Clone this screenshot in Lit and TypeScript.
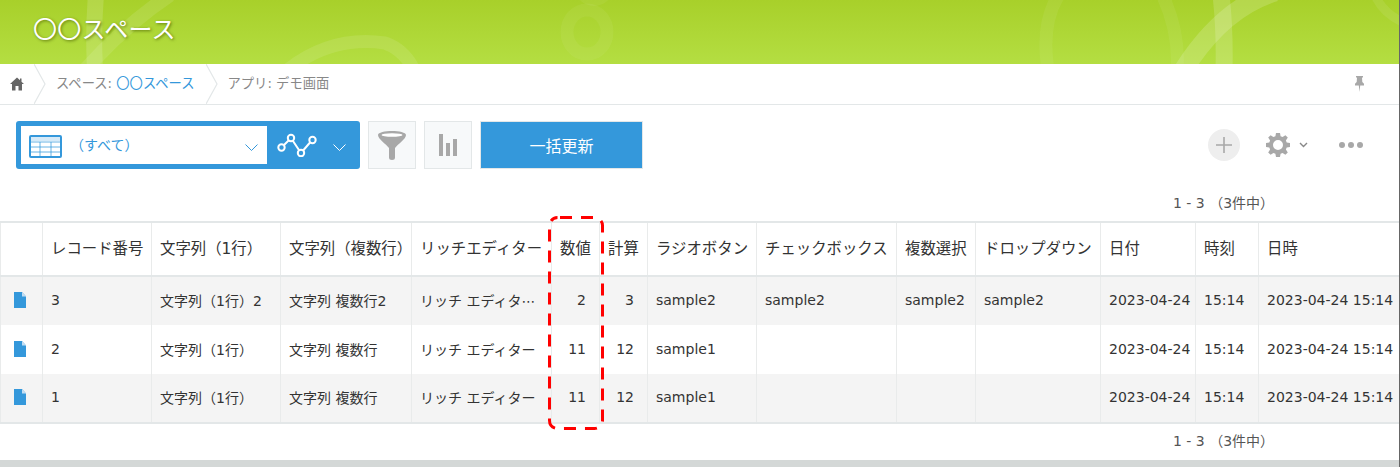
import { LitElement, html, css, unsafeCSS } from "lit";
import { customElement } from "lit/decorators.js";

const FONT = `"DejaVu Sans", "Noto Sans CJK JP", sans-serif`;
const cols = [42, 109, 129, 131, 140, 48, 48, 109, 140, 79, 125, 95, 63, 142];
const headers = ["", "レコード番号", "文字列（1行）", "文字列（複数行）", "リッチエディター", "数値", "計算", "ラジオボタン", "チェックボックス", "複数選択", "ドロップダウン", "日付", "時刻", "日時"];
const rows = [
  ["3", "文字列（1行）2", "文字列 複数行2", "リッチ エディタ⋯", "2", "3", "sample2", "sample2", "sample2", "sample2", "2023-04-24", "15:14", "2023-04-24 15:14"],
  ["2", "文字列（1行）", "文字列 複数行", "リッチ エディター", "11", "12", "sample1", "", "", "", "2023-04-24", "15:14", "2023-04-24 15:14"],
  ["1", "文字列（1行）", "文字列 複数行", "リッチ エディター", "11", "12", "sample1", "", "", "", "2023-04-24", "15:14", "2023-04-24 15:14"],
];

@customElement("app-root")
export class AppRoot extends LitElement {
  static styles = css`
    :host { display: block; position: relative; width: 1400px; height: 467px; overflow: hidden; background: #fff; font-family: ${unsafeCSS(FONT)}; color: #333; font-size: 14px; }
    :host::after { content: ""; position: absolute; right: 0; top: 0; bottom: 0; width: 1px; background: #666; }
    .banner { height: 64px; position: relative; overflow: hidden; background: linear-gradient(#a8d02a, #b4de42); display: flex; align-items: center; padding-left: 33px; padding-bottom: 4px; box-sizing: border-box; }
    .banner svg { position: absolute; left: 0; top: 0; }
    .banner h1 { position: relative; margin: 0; font-size: 24px; letter-spacing: .3px; font-weight: 400; line-height: 1; color: #fff; text-shadow: 1px 1px 3px rgba(70,90,0,.75); }
    .crumbs { height: 40px; box-sizing: content-box; border-bottom: 1px solid #e3e7e8; display: flex; align-items: center; color: #888; position: relative; font-size: 13.3px; }
    .home { width: 34px; display: flex; justify-content: center; }
    .sep { width: 12px; height: 40px; margin: 0 10px 0 0; flex: none; }
    .crumb { margin-right: 11px; line-height: 40px; white-space: nowrap; }
    .crumb a { color: #3498db; }
    .pin { margin-left: auto; margin-right: 36px; display: flex; }
    .toolbar { height: 63px; padding: 16px 16px 0; display: flex; align-items: flex-start; }
    .viewsel { width: 344px; height: 48px; background: #3498db; border-radius: 3px; display: flex; padding: 5px; box-sizing: border-box; flex: none; }
    .viewbox { width: 246px; height: 38px; background: #fff; display: flex; align-items: center; padding-left: 8px; box-sizing: border-box; color: #3498db; font-size: 14px; }
    .tableicon { margin-top: 2px; }
    .viewbox .label { margin-left: 8px; flex: 1; padding-bottom: 2px; }
    .chev { margin-top: 4px; }
    .viewbox .chev { margin-right: 9px; }
    .graph { flex: 1; display: flex; align-items: center; padding-left: 10px; }
    .graph .chev { margin-left: 16px; }
    .iconbtn { width: 48px; height: 48px; background: #f7f9fa; border: 1px solid #e3e7e8; box-sizing: border-box; margin-left: 8px; display: flex; align-items: center; justify-content: center; flex: none; }
    .bulk { width: 163px; height: 48px; margin-left: 8px; background: #3498db; border: 1px solid #e3e7e8; box-sizing: border-box; color: #fff; font-size: 16px; display: flex; align-items: center; justify-content: center; flex: none; }
    .right { margin-left: auto; display: flex; align-items: center; height: 48px; padding-right: 21px; }
    .plus { width: 32px; height: 32px; border-radius: 50%; background: #eee; display: flex; align-items: center; justify-content: center; }
    .gear { margin-left: 26px; display: flex; }
    .gearchev { margin-left: 9px; margin-right: 31px; display: flex; }
    .pager { height: 37px; padding-right: 132px; text-align: right; line-height: 20px; color: #555; padding-top: 9px; box-sizing: border-box; }
    .pager.bottom { height: 36px; padding-top: 7px; }
    .pager span { display: inline-block; width: 95px; text-align: left; white-space: nowrap; }
    table { border-collapse: collapse; table-layout: fixed; width: 1400px; }
    th, td { border: 2px solid #e9ebeb; border-width: 0 0 0 1px; padding: 0 0 2px 8px; font-weight: 400; text-align: left; white-space: nowrap; overflow: hidden; box-sizing: border-box; }
    thead tr { height: 54px; }
    th { border-top: 2px solid #e3e7e8; border-bottom: 2px solid #e3e7e8; font-size: 15.4px; padding-bottom: 5px; }
    tbody tr { height: 49px; }
    tbody tr:last-child { border-bottom: 2px solid #e3e7e8; }
    tbody tr.odd { background: #f4f4f4; }
    td.num { text-align: right; padding: 0 13px 2px 0; }
    td.doc { padding: 0 0 2px 13px; }
    td.doc svg { display: block; }
    .footer { height: 7px; background: #d4d8d7; }
    .dash { position: absolute; left: 546px; top: 214px; }
  `;

  chev(color: string) {
    return html`<svg class="chev" width="13" height="7" viewBox="0 0 13 7"><path d="M.5.5l6 6 6-6" fill="none" stroke=${color} stroke-width="1"/></svg>`;
  }
  sepIcon() {
    return html`<svg class="sep" viewBox="0 0 12 40"><path d="M0 0l11 20L0 40" fill="none" stroke="#e3e7e8" stroke-width="1.2"/></svg>`;
  }

  render() {
    return html`
      <div class="banner">
        <svg width="1400" height="64" fill="none">
          <g stroke="#fff">
            <path d="M96 -5 Q93 30 95 70" stroke-width="16" stroke-opacity=".14"/>
            <path d="M170 -5 Q125 25 85 70" stroke-width="14" stroke-opacity=".1"/>
            <path d="M285 72 Q330 35 385 43 Q405 50 415 72" stroke-width="13" stroke-opacity=".1"/>
            <ellipse cx="587" cy="32" rx="20" ry="22" stroke-opacity=".05" stroke-width="13"/>
            <ellipse cx="594" cy="-10" rx="14" ry="12" stroke-opacity=".05" stroke-width="8"/>
            <path d="M1048 70 Q1040 20 1062 -10" stroke-opacity=".06" stroke-width="13"/>
            <path d="M1177 70 Q1180 30 1160 -10" stroke-opacity=".06" stroke-width="13"/>
            <path d="M1182 72 Q1222 8 1275 -8" stroke-opacity=".16" stroke-width="19"/>
            <path d="M1221 -5 Q1225 30 1224 70" stroke-opacity=".16" stroke-width="17"/>
            <path d="M1375 -5 Q1382 12 1402 22" stroke-opacity=".08" stroke-width="9"/>
          </g>
        </svg>
        <h1>〇〇スペース</h1>
      </div>
      <div class="crumbs">
        <div class="home">
          <svg width="14" height="14" viewBox="0 0 14 14"><path d="M7 .5L0 7h2v6.500h3.500V9h3v4.500H12V7h2l-2.500-2.300V1.500H10v1.800z" fill="#666"/></svg>
        </div>
        ${this.sepIcon()}
        <div class="crumb">スペース: <a>〇〇スペース</a></div>
        ${this.sepIcon()}
        <div class="crumb">アプリ: デモ画面</div>
        <div class="pin">
          <svg width="9" height="16" viewBox="0 0 9 16"><path d="M1 0h7v1.500H7l.3 4.500 1.700 1.800V9.500H5.200L4.500 16l-.7-6.500H0V7.800L1.700 6 2 1.500H1z" fill="#a8a8a8"/></svg>
        </div>
      </div>
      <div class="toolbar">
        <div class="viewsel">
          <div class="viewbox">
            <svg class="tableicon" width="33" height="23" viewBox="0 0 33 23"><rect x="1" y="1" width="31" height="21" rx="1" fill="#fff" stroke="#3498db" stroke-width="2"/><path d="M1 7h31M1 12h31M1 17h31M11 7v15M22 7v15" stroke="#3498db" stroke-opacity=".75"/><rect x="1" y="1" width="31" height="5" fill="#3498db" fill-opacity=".2"/></svg>
            <span class="label">（すべて）</span>
            ${this.chev("#3498db")}
          </div>
          <div class="graph">
            <svg width="40" height="24" viewBox="0 0 40 24" fill="none" stroke="#fff" stroke-width="2"><path d="M4.500 14.500L14 5l10 15 12-14"/><g fill="#3498db"><circle cx="4.500" cy="14.500" r="3.200"/><circle cx="14" cy="5" r="3.200"/><circle cx="24" cy="20" r="3.200"/><circle cx="35.500" cy="7" r="3.200"/></g></svg>
            ${this.chev("#fff")}
          </div>
        </div>
        <div class="iconbtn">
          <svg width="28" height="29" viewBox="0 0 28 29"><path d="M0 4C0 1.500 7 0 14 0s14 1.500 14 4c0 4-8 9-11 13v9.500q0 2.500-3 2.500t-3-2.500V17C8 13 0 8 0 4z" fill="#a8a8a8"/><ellipse cx="14" cy="4" rx="10.500" ry="1.800" fill="#fff"/></svg>
        </div>
        <div class="iconbtn">
          <svg width="18" height="22" viewBox="0 0 18 22" fill="#a8a8a8"><rect x="0" y="0" width="4" height="22"/><rect x="7" y="9" width="4" height="13"/><rect x="14" y="5" width="4" height="17"/></svg>
        </div>
        <div class="bulk">一括更新</div>
        <div class="right">
          <div class="plus"><svg width="16" height="16" viewBox="0 0 16 16"><path d="M8 0v16M0 8h16" stroke="#a8a8a8" stroke-width="1.600"/></svg></div>
          <div class="gear">
            <svg width="24" height="24" viewBox="0 0 24 24"><path fill="#a8a8a8" fill-rule="evenodd" d="M10 0h4l.6 3.300 2 .8L19.400 2.200l2.400 2.400-1.900 2.800.8 2 3.300.6v4l-3.300.6-.8 2 1.900 2.800-2.400 2.400-2.800-1.900-2 .8L14 24h-4l-.6-3.300-2-.8-2.800 1.900-2.400-2.400 1.900-2.800-.8-2L0 14v-4l3.300-.6.8-2-1.900-2.800 2.400-2.400 2.800 1.900 2-.8zM12 7a5 5 0 1 0 0 10 5 5 0 0 0 0-10z"/></svg>
          </div>
          <div class="gearchev"><svg width="9" height="6" viewBox="0 0 9 6"><path d="M1 1l3.500 3.500L8 1" fill="none" stroke="#888" stroke-width="1.400"/></svg></div>
          <svg width="24" height="6" viewBox="0 0 24 6" fill="#a8a8a8"><circle cx="3" cy="3" r="3"/><circle cx="12" cy="3" r="3"/><circle cx="21" cy="3" r="3"/></svg>
        </div>
      </div>
      <div class="pager"><span>1 - 3 （3件中）</span></div>
      <table>
        <colgroup>${cols.map((w) => html`<col style="width:${w}px">`)}</colgroup>
        <thead><tr>${headers.map((h) => html`<th>${h}</th>`)}</tr></thead>
        <tbody>
          ${rows.map((r, i) => html`
            <tr class=${i % 2 === 0 ? "odd" : ""}>
              <td class="doc"><svg width="12" height="16" viewBox="0 0 12 16"><path d="M0 0h8L12 4.500V16H0z" fill="#3498db"/><path d="M8 0v4.500H12z" fill="#c4def3"/></svg></td>
              ${r.map((c, j) => html`<td class=${j === 4 || j === 5 ? "num" : ""}>${c}</td>`)}
            </tr>`)}
        </tbody>
      </table>
      <div class="pager bottom"><span>1 - 3 （3件中）</span></div>
      <div class="footer"></div>
      <svg class="dash" width="60" height="218" viewBox="0 0 60 218" fill="none">
        <rect x="3.500" y="3.500" width="53" height="211" rx="8" stroke="#f00" stroke-width="3" stroke-dasharray="12 9" stroke-dashoffset="18.500"/>
      </svg>
    `;
  }
}
